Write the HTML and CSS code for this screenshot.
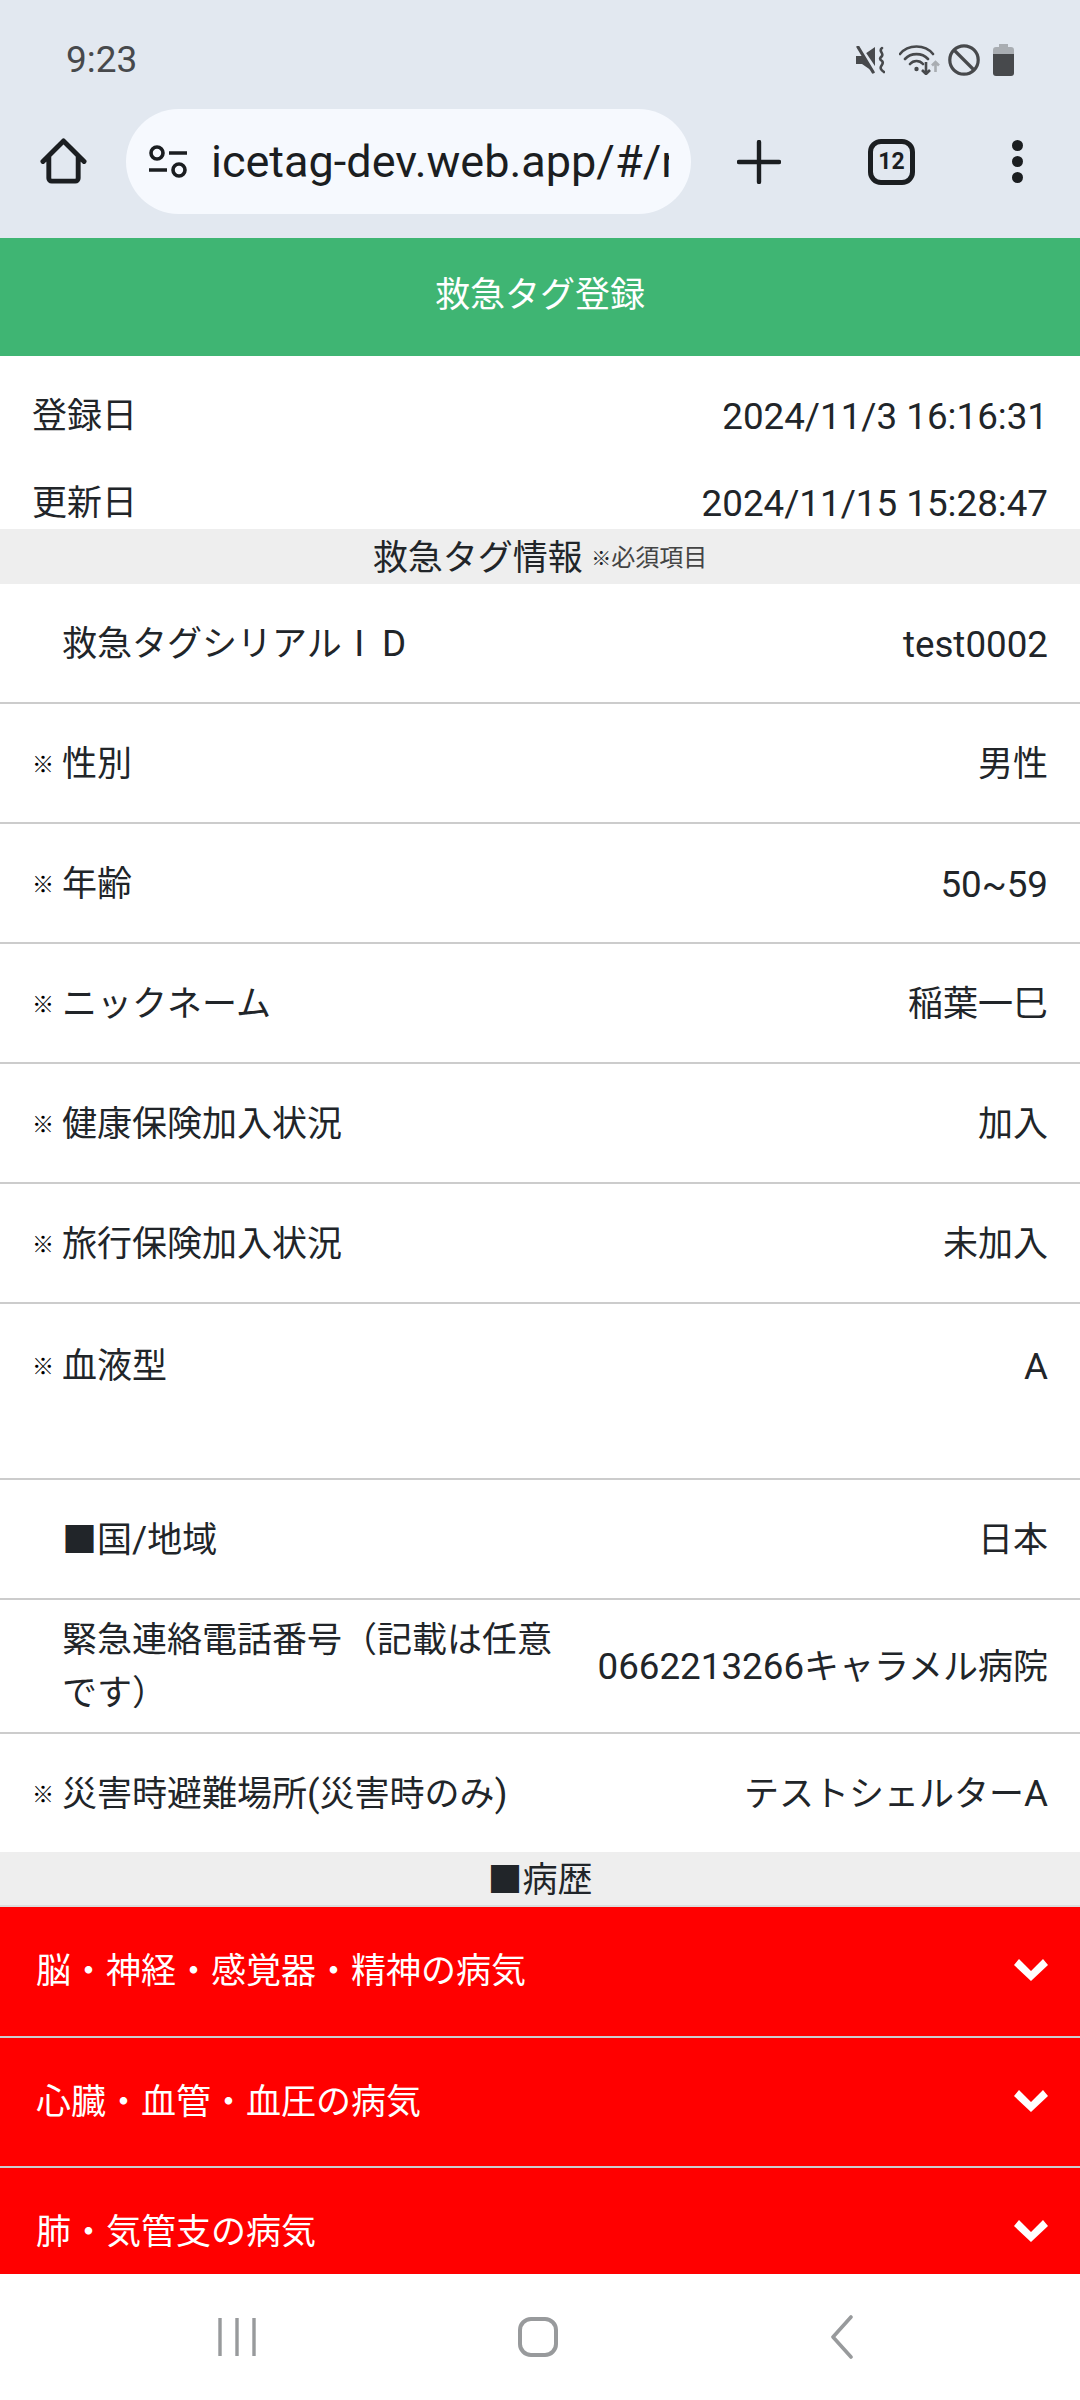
FILE: index.html
```html
<!DOCTYPE html>
<html lang="ja">
<head>
<meta charset="utf-8">
<title>救急タグ登録</title>
<link rel="stylesheet" href="styles.css">
</head>
<body>
<div class="screen">
  <div class="chrome">
    <div class="status">
      <span class="time">9:23</span>
      <div class="status-icons">
        <svg class="ic-mute" viewBox="0 0 29 28"><path d="M0 10h6L19 1v26L6 18H0z" fill="#47494c"/><path d="M3 0l19 28" stroke="#e2e8f0" stroke-width="4"/><path d="M2 1l15 25" stroke="#47494c" stroke-width="3.200" stroke-linecap="round"/><path d="M26 2c-4 3 2 5 0 8-2 2-3 3 0 5 3 3-3 5-1 8 1 2 2 2 3 3" fill="none" stroke="#47494c" stroke-width="2.600" stroke-linecap="round"/></svg>
        <svg class="ic-wifi" viewBox="0 0 42 31"><path d="M1 10C9 0 26 0 34 10M6 15c6-6.500 17-6.500 23 0M11 20c3.500-4 9.500-4 13 0" fill="none" stroke="#47494c" stroke-width="2.600" stroke-linecap="round"/><circle cx="17.500" cy="25" r="2.200" fill="#47494c"/><path d="M27 18v12M23 26l4 4 4-4" fill="none" stroke="#47494c" stroke-width="2.600"/><path d="M36.500 28V18M33 21.500l3.500-3.500 3.500 3.500" fill="none" stroke="#a9adb2" stroke-width="2.600"/></svg>
        <svg class="ic-block" viewBox="0 0 32 32"><circle cx="16" cy="16" r="14.200" fill="none" stroke="#47494c" stroke-width="3.200"/><path d="M6 6l20 20" stroke="#47494c" stroke-width="3.200"/></svg>
        <svg class="ic-batt" viewBox="0 0 21 32"><path d="M6 0h9v3h3a3 3 0 0 1 3 3v5H0V6a3 3 0 0 1 3-3h3z" fill="#a9adb2"/><path d="M0 10h21v19a3 3 0 0 1-3 3H3a3 3 0 0 1-3-3z" fill="#47494c"/></svg>
      </div>
    </div>
    <div class="toolbar">
      <svg class="ic-home" viewBox="0 0 48 48"><path d="M3 24L24 3l21 21M9 18v23a3 3 0 0 0 3 3h24a3 3 0 0 0 3-3V18" fill="none" stroke="#1b1e21" stroke-width="5" stroke-linecap="round" stroke-linejoin="round"/></svg>
      <div class="omnibox">
        <svg class="ic-tune" viewBox="0 0 40 33"><circle cx="9" cy="8" r="6" fill="none" stroke="#1b1e21" stroke-width="3.600"/><path d="M21 8h18M1 25h18" stroke="#1b1e21" stroke-width="3.600"/><circle cx="31" cy="25" r="6" fill="none" stroke="#1b1e21" stroke-width="3.600"/></svg>
        <span class="url">icetag-dev.web.app/#/r</span>
      </div>
      <svg class="ic-plus" viewBox="0 0 44 44"><path d="M22 2v40M2 22h40" stroke="#1b1e21" stroke-width="4.400" stroke-linecap="round"/></svg>
      <div class="tabs">12</div>
      <div class="menu"><i></i><i></i><i></i></div>
    </div>
  </div>
  <main class="page">
    <header class="app-title">救急タグ登録</header>
    <div class="meta meta-first"><span>登録日</span><span class="lat">2024/11/3 16:16:31</span></div>
    <div class="meta meta-second"><span>更新日</span><span class="lat">2024/11/15 15:28:47</span></div>
    <div class="band">救急タグ情報 <small><span class="kome">※</span>必須項目</small></div>
    <div class="row"><span class="mark"></span><span class="label">救急タグシリアル<span class="fw">I</span><span class="fw">D</span></span><span class="value lat">test0002</span></div>
    <div class="row"><span class="mark">※</span><span class="label">性別</span><span class="value">男性</span></div>
    <div class="row"><span class="mark">※</span><span class="label">年齢</span><span class="value lat">50~59</span></div>
    <div class="row"><span class="mark">※</span><span class="label">ニックネーム</span><span class="value">稲葉一巳</span></div>
    <div class="row"><span class="mark">※</span><span class="label">健康保険加入状況</span><span class="value">加入</span></div>
    <div class="row"><span class="mark">※</span><span class="label">旅行保険加入状況</span><span class="value">未加入</span></div>
    <div class="row row-tall"><span class="mark">※</span><span class="label">血液型</span><span class="value lat">A</span></div>
    <div class="row"><span class="mark"></span><span class="label">■国<span class="lat">/</span>地域</span><span class="value">日本</span></div>
    <div class="row row-wrap"><span class="mark"></span><span class="label label-narrow">緊急連絡電話番号（記載は任意です）</span><span class="value"><span class="lat">0662213266</span>キャラメル病院</span></div>
    <div class="row row-last"><span class="mark">※</span><span class="label">災害時避難場所<span class="lat">(</span>災害時のみ<span class="lat">)</span></span><span class="value">テストシェルター<span class="lat">A</span></span></div>
    <div class="band band-plain">■病歴</div>
    <div class="acc"><span>脳・神経・感覚器・精神の病気</span><svg class="chev" viewBox="0 0 34 22"><path d="M0 6l5-6 12 12L29 0l5 6-17 16z" fill="#fff"/></svg></div>
    <div class="acc"><span>心臓・血管・血圧の病気</span><svg class="chev" viewBox="0 0 34 22"><path d="M0 6l5-6 12 12L29 0l5 6-17 16z" fill="#fff"/></svg></div>
    <div class="acc"><span>肺・気管支の病気</span><svg class="chev" viewBox="0 0 34 22"><path d="M0 6l5-6 12 12L29 0l5 6-17 16z" fill="#fff"/></svg></div>
  </main>
  <nav class="navbar">
    <svg class="nav-recents" viewBox="0 0 38 40"><path d="M2 1v38M19 1v38M36 1v38" stroke="#989a9c" stroke-width="3.400"/></svg>
    <svg class="nav-home" viewBox="0 0 40 40"><rect x="2" y="2" width="36" height="36" rx="11" fill="none" stroke="#989a9c" stroke-width="4"/></svg>
    <svg class="nav-back" viewBox="0 0 24 44"><path d="M21 2L3 22l18 20" fill="none" stroke="#989a9c" stroke-width="3.600" stroke-linecap="round" stroke-linejoin="round"/></svg>
  </nav>
</div>
</body>
</html>
```
FILE: styles.css
```css
* { box-sizing: border-box; }
html, body { margin: 0; padding: 0; background: #fff; }
body { font-family: Roboto, "Noto Sans CJK JP", sans-serif; color: #212529; }
svg { display: block; flex: none; }
.screen { width: 1080px; height: 2400px; display: flex; flex-direction: column; overflow: hidden; }

.chrome { height: 238px; flex: none; background: #e2e8f0; }
.status { height: 109px; display: flex; align-items: center; justify-content: space-between; padding: 10px 66px 0 66px; }
.time { font-size: 37px; color: #47494c; }
.status-icons { display: flex; align-items: center; }
.ic-mute { width: 29px; height: 28px; margin-right: 14px; }
.ic-wifi { width: 42px; height: 31px; margin-right: 7px; }
.ic-block { width: 32px; height: 32px; margin-right: 13px; }
.ic-batt { width: 21px; height: 32px; }

.toolbar { display: flex; align-items: center; height: 105px; }
.ic-home { width: 47px; height: 47px; margin-left: 40px; }
.omnibox { width: 565px; height: 105px; margin-left: 39px; border-radius: 53px; background: #f6f9fe; display: flex; align-items: center; padding-left: 22px; overflow: hidden; }
.ic-tune { width: 40px; height: 33px; }
.url { font-size: 45px; color: #1b1e21; margin-left: 23px; width: 458px; white-space: nowrap; overflow: hidden; }
.ic-plus { width: 44px; height: 44px; margin-left: 46px; }
.tabs { width: 47px; height: 46px; margin-left: 87px; border: 5px solid #1b1e21; border-radius: 13px; font-size: 23px; font-weight: 700; color: #1b1e21; display: flex; align-items: center; justify-content: center; }
.menu { display: flex; flex-direction: column; gap: 5px; margin-left: 97px; }
.menu i { display: block; width: 11px; height: 11px; border-radius: 50%; background: #1b1e21; }

.page { height: 2036px; flex: none; overflow: hidden; font-size: 35px; line-height: 50px; }
.lat { font-size: 36.75px; }
.app-title { height: 118px; background: #3fb573; color: #fff; display: flex; align-items: center; justify-content: center; padding-bottom: 2px; }
.meta { display: flex; align-items: center; justify-content: space-between; padding: 0 32px; white-space: nowrap; }
.meta-first { height: 87px; padding-top: 34px; }
.meta-second { height: 86px; padding-top: 36px; }
.band { height: 55px; background: #eee; display: flex; align-items: center; justify-content: center; white-space: pre; padding-top: 4px; }
.band small { font-size: 24px; color: #444; }
.kome { font-size: 20px; font-weight: 700; color: #212529; }
.band-plain { height: 55px; border-bottom: 2px solid #ddd; }
.row { height: 120px; border-bottom: 2px solid #ccc; display: flex; align-items: center; padding: 3px 32px 0; }
.row-last { height: 118px; border-bottom: 0; }
.row-tall { height: 176px; align-items: flex-start; padding-top: 38px; }
.row-wrap { height: 134px; }
.mark { width: 30px; font-size: 22px; font-weight: 900; color: #000; flex: none; }
.label { flex: 1; white-space: nowrap; }
.label-narrow { flex: none; width: 500px; white-space: normal; line-height: 52.500px; margin-right: 22px; }
.value { white-space: nowrap; margin-left: auto; }
.fw { display: inline-block; width: 35px; text-align: center; font-size: 36.75px; }
.acc { height: 130.5px; background: #f00; color: #fff; display: flex; align-items: center; justify-content: space-between; padding: 2px 32px 0 36px; border-bottom: 2px solid #ccc; }
.chev { width: 34px; height: 22px; margin-top: -4px; }
.navbar { flex: 1; display: flex; align-items: center; background: #fff; padding-left: 218px; }
.nav-recents { width: 38px; height: 40px; }
.nav-home { width: 40px; height: 40px; margin-left: 262px; }
.nav-back { width: 24px; height: 44px; margin-left: 272px; }
```
